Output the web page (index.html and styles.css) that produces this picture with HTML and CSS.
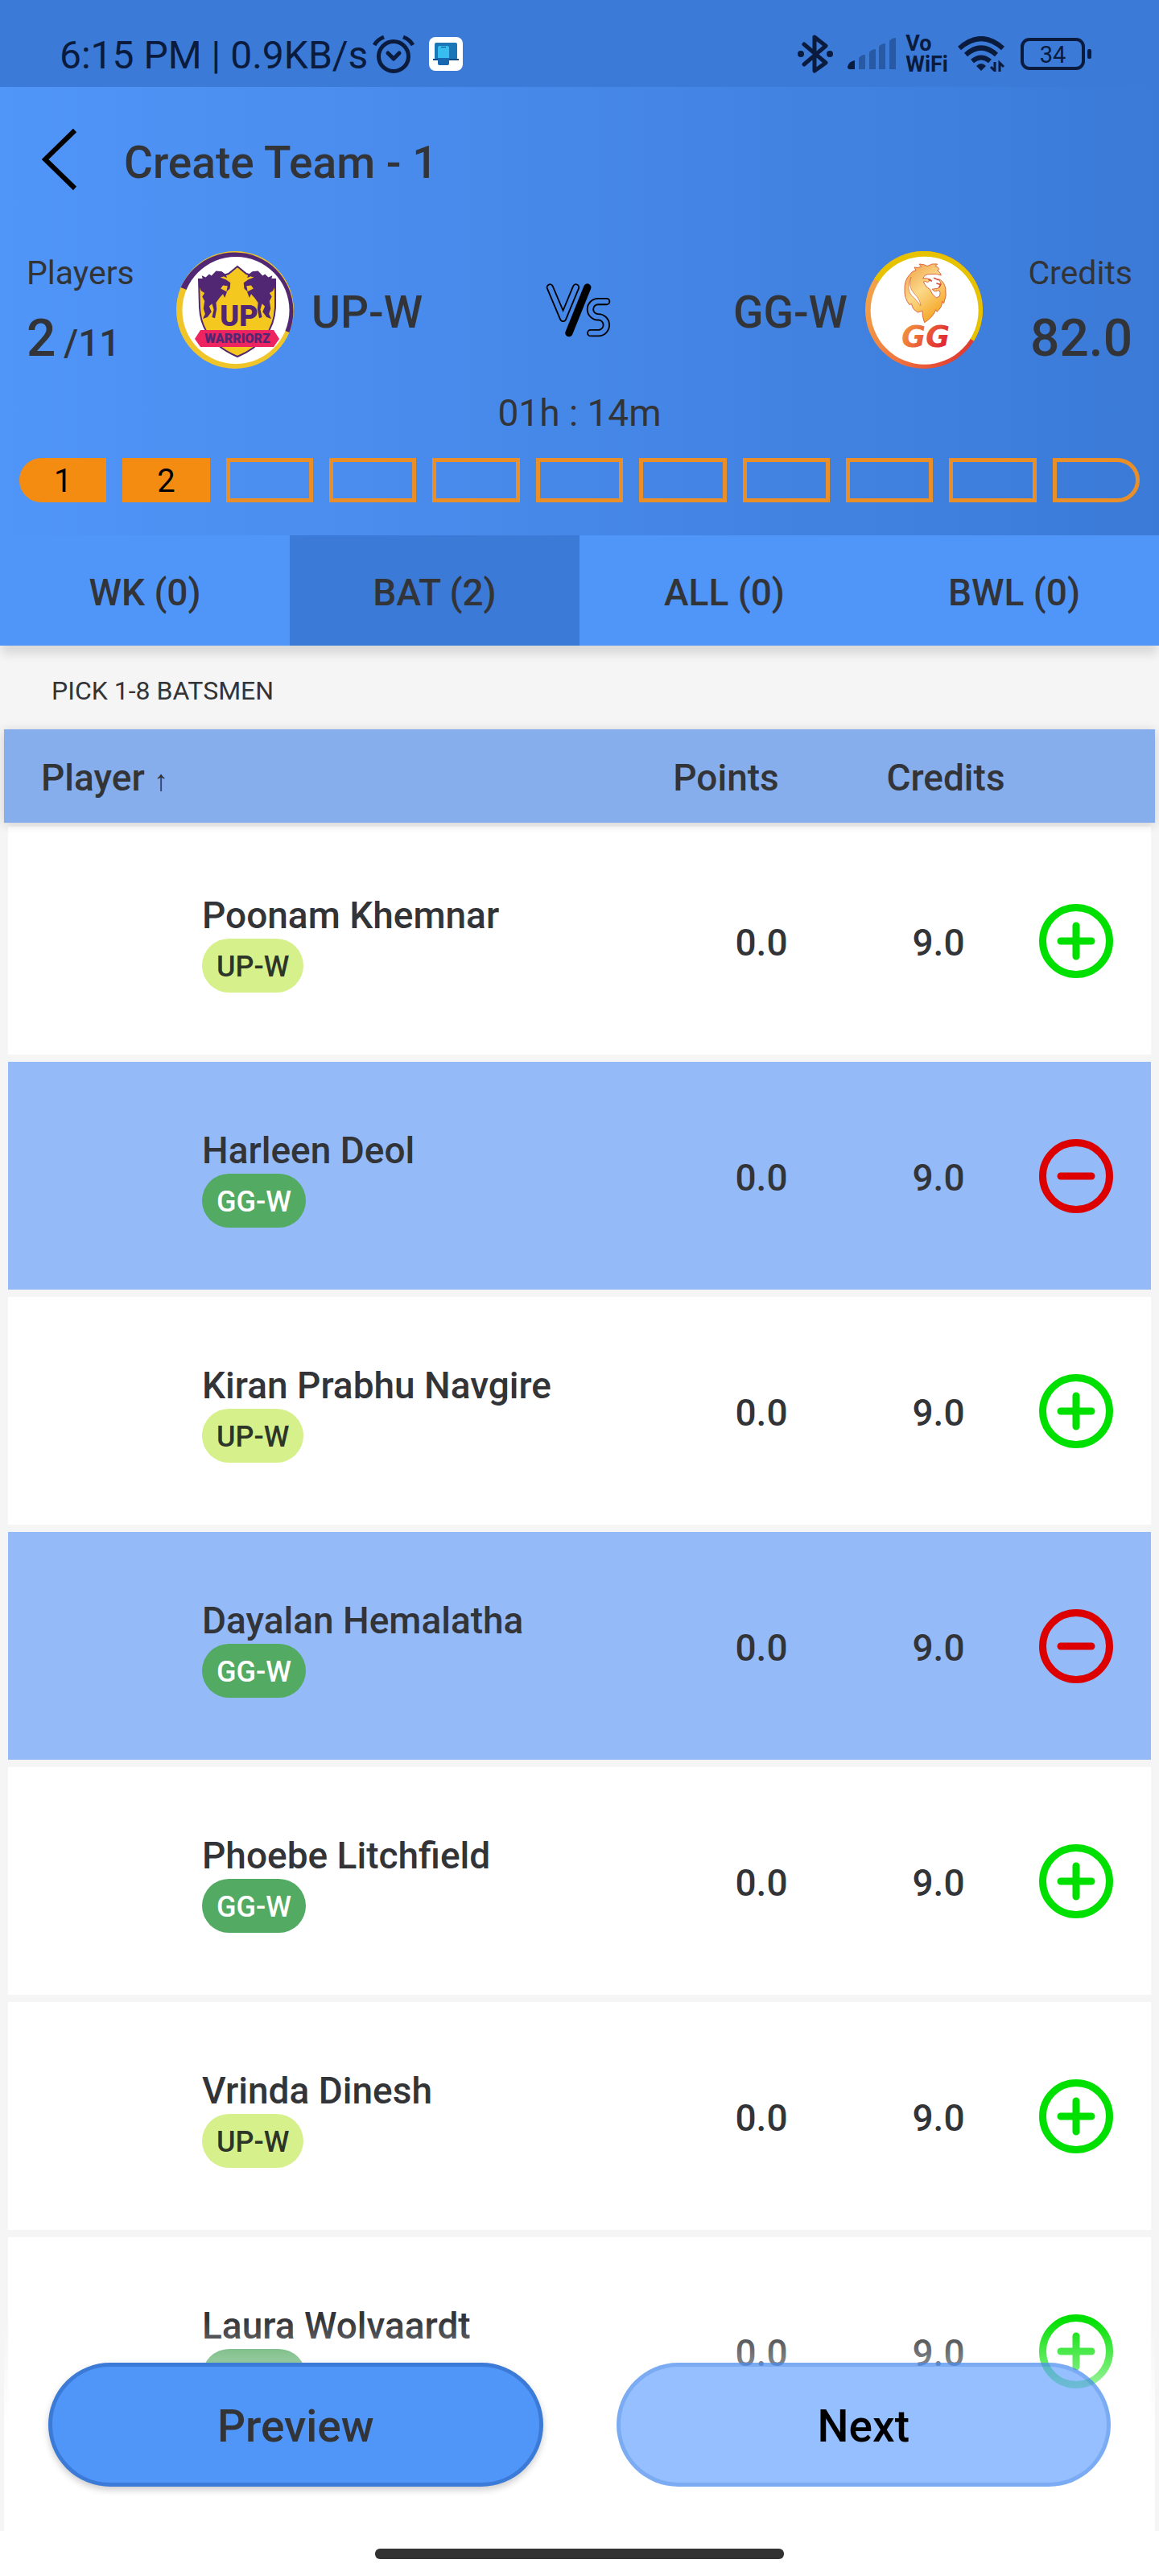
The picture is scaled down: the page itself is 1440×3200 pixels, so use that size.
FILE: index.html
```html
<!DOCTYPE html>
<html lang="en">
<head>
<meta charset="utf-8">
<meta name="viewport" content="width=device-width, initial-scale=1">
<title>Create Team - 1</title>
<link rel="stylesheet" href="styles.css">
</head>
<body>
<svg class="sprite" aria-hidden="true">
  <symbol id="add" viewBox="0 0 92 92">
    <circle cx="46" cy="46" r="41.5"/><path d="M27 46H65M46 27V65"/>
  </symbol>
  <symbol id="remove" viewBox="0 0 92 92">
    <circle cx="46" cy="46" r="41.5"/><path d="M27 46H65"/>
  </symbol>
</svg>

<div class="status-bar">
  <div class="status-left">
    <span class="status-text">6:15 PM | 0.9KB/s</span>
    <svg class="icon-alarm" viewBox="0 0 52 48" width="52" height="48" aria-hidden="true">
      <g fill="none" stroke="#0a1b3d" stroke-width="5">
        <circle cx="26" cy="27" r="18.5"/>
        <path d="M2 13Q6 6 14 3M50 13Q46 6 38 3"/>
        <path d="M19 23L26 30L33 23" stroke-linecap="round" stroke-linejoin="round"/>
      </g>
    </svg>
    <svg class="icon-link" viewBox="0 0 42 42" width="42" height="42" aria-hidden="true">
      <rect width="42" height="42" rx="8" fill="#fff"/>
      <rect x="7" y="7" width="28" height="21" rx="2" fill="#1b76b8"/>
      <rect x="5" y="27" width="32" height="2" fill="#0e4a84"/>
      <rect x="11" y="11" width="14" height="24" rx="2" fill="#1666b0"/>
      <path d="M13 11H23Q25 11 25 13V26H11V13Q11 11 13 11Z" fill="#37bdf0"/>
      <rect x="15" y="12" width="6" height="1" fill="#0e4a84"/>
    </svg>
  </div>
  <div class="status-right">
    <svg viewBox="0 0 46 50" width="46" height="50" aria-hidden="true">
      <path d="M9 13L36 36L22 46V4L36 15L9 38" fill="none" stroke="#0a1b3d" stroke-width="5" stroke-linejoin="round" stroke-linecap="round"/>
      <circle cx="5" cy="25" r="4" fill="#0a1b3d"/><circle cx="41" cy="25" r="4" fill="#0a1b3d"/>
    </svg>
    <svg class="icon-signal" viewBox="0 0 61 40" width="61" height="40" aria-hidden="true">
      <path d="M0 36Q2 29 9 28V39H3Q0 39 0 36Z" fill="#0a1b3d"/>
      <g fill="#2859a5"><path d="M14 25Q17 21 22 21V39H14Z"/><path d="M27 18Q30 14 35 14V39H27Z"/><path d="M39 11Q42 7 47 7V39H39Z"/><path d="M52 4Q55 0 60 0V39H52Z"/></g>
    </svg>
    <span class="vowifi"><span>Vo</span><span>WiFi</span></span>
    <svg class="icon-wifi" viewBox="0 0 59 44" width="59" height="44" aria-hidden="true">
      <g fill="none" stroke="#0a1b3d" stroke-width="6">
        <path d="M2 15Q29 -9 56 15"/><path d="M10 23Q29 6 48 23"/><path d="M18 31Q29 22 40 31"/>
      </g>
      <path d="M23 37Q29 31 35 37L29 43Z" fill="#0a1b3d"/>
      <path d="M46 32V43L41 38M52 44V33L57 38" fill="none" stroke="#0a1b3d" stroke-width="3"/>
    </svg>
    <span class="battery">34</span>
  </div>
</div>

<header class="match-header">
  <div class="app-bar">
    <button class="back" type="button" aria-label="Back">
      <svg viewBox="0 0 44 78" width="44" height="78" aria-hidden="true"><path d="M41 3L4 39L41 75" fill="none" stroke="#000" stroke-width="6"/></svg>
    </button>
    <h1 class="title">Create Team - 1</h1>
  </div>

  <div class="match">
    <div class="stat">
      <span class="stat-label">Players</span>
      <span class="stat-value">2 <small class="stat-total">/11</small></span>
    </div>
    <div class="team">
      <svg viewBox="0 0 146 146" width="146" height="146" role="img" aria-label="UP Warriorz">
        <circle cx="73" cy="73" r="73" fill="#f0c52a"/>
        <path d="M5.6 45A73 73 0 0 1 140.4 101Z" fill="#512773"/>
        <circle cx="74" cy="73.500" r="66.500" fill="#fff"/>
        <path d="M28 35H44L65 28L76 19L87 28L108 35H123V70Q121 112 76 131Q31 112 29 70Z" fill="#f5c81f" stroke="#512773" stroke-width="2"/>
        <g transform="translate(-219 -22) scale(.357 .333)" fill="#512773">
          <path d="M692 172L706 172L702 157L716 164L728 152L736 158L752 140L772 142L786 154L790 166L778 160L766 164L786 172L802 184L800 206L788 218L792 196L776 194L768 206L790 218L782 240L776 226L764 240L752 258L754 282L748 316L738 312L744 284L738 262L728 272L736 292L722 312L706 318L714 300L708 280L712 252L704 236L712 222L700 214L694 200Z"/>
          <path d="M958 172L944 172L948 157L934 164L922 152L914 158L898 140L878 142L864 154L860 166L872 160L884 164L864 172L848 184L850 206L862 218L858 196L874 194L882 206L860 218L868 240L874 226L886 240L898 258L896 282L902 316L912 312L906 284L912 262L922 272L914 292L928 312L944 318L936 300L942 280L938 252L946 236L938 222L950 214L956 200Z"/>
        </g>
        <path d="M30 98H121L128 109L121 119H30L23 109Z" fill="#ed2460"/>
        <text class="logo-up" x="78" y="93" text-anchor="middle">UP</text>
        <text class="logo-warriorz" x="76" y="114" text-anchor="middle">WARRIORZ</text>
      </svg>
      <span class="team-name">UP-W</span>
    </div>
    <svg class="versus" viewBox="354 184 244 202" width="81" height="67" role="img" aria-label="versus">
      <defs>
        <mask id="tube" maskUnits="userSpaceOnUse" x="340" y="170" width="270" height="230">
          <g fill="none" stroke-linecap="round" stroke-linejoin="round">
            <g stroke="#fff" stroke-width="28"><path d="M370 199L419 315L467 199"/><path d="M582 252H550A29 29 0 0 0 550 310A30 30 0 0 1 552 370H522"/></g>
            <g stroke="#000" stroke-width="17"><path d="M370 199L419 315L467 199"/><path d="M582 252H550A29 29 0 0 0 550 310A30 30 0 0 1 552 370H522"/></g>
          </g>
        </mask>
      </defs>
      <rect x="340" y="170" width="270" height="230" mask="url(#tube)"/>
      <path d="M510 199L441 370" stroke="#000" stroke-width="28" stroke-linecap="round"/>
    </svg>
    <div class="team">
      <span class="team-name">GG-W</span>
      <svg viewBox="225 66 438 438" width="146" height="146" role="img" aria-label="GG">
        <defs>
          <linearGradient id="ring" x1="0" y1=".3" x2="1" y2=".8"><stop offset="0" stop-color="#f2a64a"/><stop offset=".5" stop-color="#f0703c"/><stop offset="1" stop-color="#dc3030"/></linearGradient>
          <linearGradient id="fur" x1="0" y1="0" x2=".6" y2="1"><stop offset="0" stop-color="#f09a3e"/><stop offset=".5" stop-color="#fbd98a"/><stop offset="1" stop-color="#f5a623"/></linearGradient>
          <linearGradient id="gg" x1="0" y1="0" x2="1" y2=".4"><stop offset="0" stop-color="#f5a540"/><stop offset="1" stop-color="#e02a33"/></linearGradient>
        </defs>
        <circle cx="444" cy="285" r="219" fill="url(#ring)"/>
        <path d="M258 169A219 219 0 0 1 630 401Z" fill="#e6c200"/>
        <circle cx="446" cy="287" r="201" fill="#fff"/>
        <path d="M392 152Q402 138 414 138L408 126Q422 130 434 124L426 114Q446 114 456 122Q474 110 494 114L486 122Q500 126 500 134L494 138Q506 146 508 156Q490 148 470 152Q446 150 440 168Q452 164 470 172L458 182Q448 176 442 180Q448 200 466 208Q472 226 490 240L502 234Q508 220 500 212L484 216L474 208L498 204L508 190L500 170Q520 180 524 204Q530 230 518 260L512 252Q512 276 492 292L488 284Q480 310 446 332Q436 306 438 288L422 294Q400 284 398 262L390 266Q370 240 372 210Q370 174 392 152Z" fill="url(#fur)" stroke="#dd6740" stroke-width="3" stroke-linejoin="round"/>
        <path d="M396 162Q384 200 406 222Q430 246 432 270Q410 240 398 232Q376 206 396 162Z" fill="#fff" stroke="#dd6740" stroke-width="2"/>
        <path d="M460 172L474 178M480 166L500 174M490 186L506 190L500 202" fill="none" stroke="#d4503a" stroke-width="5"/>
        <text class="logo-gg" x="450" y="422" text-anchor="middle" fill="url(#gg)">GG</text>
      </svg>
    </div>
    <div class="stat stat-end">
      <span class="stat-label">Credits</span>
      <span class="stat-value">82.0</span>
    </div>
  </div>

  <p class="timer">01h : 14m</p>
  <ol class="slots">
    <li class="slot filled">1</li><li class="slot filled">2</li><li class="slot"></li><li class="slot"></li><li class="slot"></li><li class="slot"></li><li class="slot"></li><li class="slot"></li><li class="slot"></li><li class="slot"></li><li class="slot"></li>
  </ol>
</header>

<div class="tabs" role="tablist">
  <button class="tab" type="button" role="tab" aria-selected="false">WK (0)</button>
  <button class="tab" type="button" role="tab" aria-selected="true">BAT (2)</button>
  <button class="tab" type="button" role="tab" aria-selected="false">ALL (0)</button>
  <button class="tab" type="button" role="tab" aria-selected="false">BWL (0)</button>
</div>

<main>
  <p class="hint">PICK 1-8 BATSMEN</p>
  <table class="players">
    <thead>
      <tr class="head-row"><th scope="col" class="col-player">Player <span class="sort">↑</span></th><th scope="col">Points</th><th scope="col">Credits</th><td></td></tr>
    </thead>
    <tbody>
      <tr class="row"><th scope="row" class="player"><span class="name">Poonam Khemnar</span><span class="badge up">UP-W</span></th><td>0.0</td><td>9.0</td><td class="action"><button class="pick add" type="button" aria-label="Add Poonam Khemnar"><svg><use href="#add"/></svg></button></td></tr>
      <tr class="row selected"><th scope="row" class="player"><span class="name">Harleen Deol</span><span class="badge gg">GG-W</span></th><td>0.0</td><td>9.0</td><td class="action"><button class="pick remove" type="button" aria-label="Remove Harleen Deol"><svg><use href="#remove"/></svg></button></td></tr>
      <tr class="row"><th scope="row" class="player"><span class="name">Kiran Prabhu Navgire</span><span class="badge up">UP-W</span></th><td>0.0</td><td>9.0</td><td class="action"><button class="pick add" type="button" aria-label="Add Kiran Prabhu Navgire"><svg><use href="#add"/></svg></button></td></tr>
      <tr class="row selected"><th scope="row" class="player"><span class="name">Dayalan Hemalatha</span><span class="badge gg">GG-W</span></th><td>0.0</td><td>9.0</td><td class="action"><button class="pick remove" type="button" aria-label="Remove Dayalan Hemalatha"><svg><use href="#remove"/></svg></button></td></tr>
      <tr class="row"><th scope="row" class="player"><span class="name">Phoebe Litchfield</span><span class="badge gg">GG-W</span></th><td>0.0</td><td>9.0</td><td class="action"><button class="pick add" type="button" aria-label="Add Phoebe Litchfield"><svg><use href="#add"/></svg></button></td></tr>
      <tr class="row"><th scope="row" class="player"><span class="name">Vrinda Dinesh</span><span class="badge up">UP-W</span></th><td>0.0</td><td>9.0</td><td class="action"><button class="pick add" type="button" aria-label="Add Vrinda Dinesh"><svg><use href="#add"/></svg></button></td></tr>
      <tr class="row"><th scope="row" class="player"><span class="name">Laura Wolvaardt</span><span class="badge gg">GG-W</span></th><td>0.0</td><td>9.0</td><td class="action"><button class="pick add" type="button" aria-label="Add Laura Wolvaardt"><svg><use href="#add"/></svg></button></td></tr>
    </tbody>
  </table>
</main>

<footer class="footer">
  <div class="actions">
    <button class="btn preview" type="button">Preview</button>
    <button class="btn next" type="button">Next</button>
  </div>
  <div class="nav-bar"><span class="nav-handle"></span></div>
</footer>
</body>
</html>
```

FILE: styles.css
```css
:root {
  --blue: #5095f8;
  --blue-dark: #3b7ad7;
  --ink: #323438;
  --navy: #0a1b3d;
  --orange: #f48c12;
}

* { box-sizing: border-box; }

body {
  margin: 0;
  min-height: 100vh;
  padding-bottom: 56px;
  background: #f5f5f5;
  color: var(--ink);
  font-family: Roboto, "Liberation Sans", sans-serif;
}

h1, p, ol { margin: 0; padding: 0; }

button {
  padding: 0;
  border: 0;
  background: none;
  color: inherit;
  font-family: inherit;
}

svg { display: block; flex: none; }
.sprite { position: absolute; width: 0; height: 0; }

/* System status bar */
.status-bar {
  display: flex;
  justify-content: space-between;
  height: 108px;
  padding: 28px 92px 0 74px;
  background: var(--blue-dark);
  color: var(--navy);
}
.status-left, .status-right { display: flex; align-items: center; height: 78px; }
.status-text { padding-top: 4px; font-size: 48px; line-height: 56px; }
.icon-alarm { margin-left: 6px; }
.icon-link { margin-left: 18px; }
.icon-signal { margin-left: 17px; }
.vowifi {
  display: flex;
  flex-direction: column;
  margin-left: 11px;
  font-size: 27px;
  font-weight: 700;
  line-height: 26px;
}
.icon-wifi { margin-left: 12px; }
.battery {
  position: relative;
  width: 80px;
  height: 40px;
  margin-left: 19px;
  border: 4px solid var(--navy);
  border-radius: 11px;
  font-size: 29px;
  line-height: 34px;
  text-align: center;
}
.battery::after {
  content: "";
  position: absolute;
  top: 10px;
  right: -12px;
  width: 5px;
  height: 12px;
  border-radius: 2px;
  background: var(--navy);
}

/* Match header */
.match-header {
  padding-bottom: 41px;
  background: linear-gradient(90deg, var(--blue), var(--blue-dark));
}
.app-bar {
  display: flex;
  align-items: center;
  gap: 58px;
  height: 188px;
  padding-left: 52px;
}
.back { padding-bottom: 8px; }
.title { font-size: 55px; font-weight: 500; line-height: 64px; }
.match {
  display: grid;
  grid-template-columns: 186px auto 1fr auto 186px;
  align-items: center;
  padding: 16px 33px 0;
}
.stat { display: flex; flex-direction: column; gap: 22px; padding-top: 2px; }
.stat-end { align-items: flex-end; }
.stat-label { font-size: 41px; line-height: 48px; }
.stat-value { font-size: 64px; font-weight: 500; line-height: 72px; }
.stat-total { margin-left: -6px; font-size: 46px; line-height: 46px; }
.team { display: flex; align-items: center; gap: 22px; }
.team-name { padding-top: 6px; font-size: 55px; font-weight: 500; line-height: 64px; }
.versus { justify-self: center; }
.timer {
  padding: 28px 0 29px;
  font-size: 46px;
  line-height: 54px;
  text-align: center;
}
.slots { display: flex; gap: 20px; padding: 0 24px; list-style: none; }
.slot {
  flex: 1 1 0;
  height: 55px;
  border: 5px solid #e88f2a;
  color: #000;
  font-size: 40px;
  line-height: 47px;
  text-align: center;
}
.slot.filled { border-color: var(--orange); background: var(--orange); }
.slot:first-child { border-radius: 28px 0 0 28px; }
.slot:last-child { border-radius: 0 28px 28px 0; }

.logo-up, .logo-warriorz { fill: #512773; font-family: Roboto, sans-serif; font-weight: 900; }
.logo-up { font-family: "Liberation Sans Narrow", Roboto, sans-serif; font-size: 36px; }
.logo-warriorz { font-size: 16px; }
.logo-gg { font-family: "DejaVu Sans", sans-serif; font-size: 110px; font-style: italic; font-weight: 700; }

/* Role tabs */
.tabs {
  position: relative;
  display: flex;
  box-shadow: 0 12px 12px -2px rgba(0, 0, 0, .12);
}
.tab {
  flex: 1 1 0;
  height: 137px;
  padding-top: 4px;
  background: var(--blue);
  font-size: 46px;
  font-weight: 500;
  line-height: 54px;
}
.tab[aria-selected="true"] { background: var(--blue-dark); }

/* Player list */
.hint { padding: 37px 64px 29px; font-size: 32px; line-height: 38px; }
.players, .players thead, .players tbody { display: block; }
.head-row, .row { display: grid; align-items: center; }
.head-row {
  position: relative;
  grid-template-columns: 1fr 396px 150px 185px;
  height: 116px;
  margin: 0 5px 5px;
  background: #86aeec;
  box-shadow: 0 2px 12px rgba(0, 0, 0, .16);
}
.row {
  grid-template-columns: 1fr 284px 156px 186px;
  min-height: 283px;
  margin: 0 10px 9px;
  background: #fff;
}
.row.selected { background: #94baf8; }
.players th, .players td {
  padding: 4px 0 0;
  font-size: 46px;
  font-weight: 500;
  line-height: 54px;
  text-align: center;
}
.players .col-player { padding-left: 46px; text-align: left; }
.sort { font-size: 36px; font-weight: 400; line-height: 30px; }
.players .player {
  display: flex;
  flex-direction: column;
  align-items: flex-start;
  gap: 2px;
  padding: 6px 0 0 241px;
}
.badge {
  padding: 14px 18px 11px;
  border-radius: 34px;
  font-size: 36px;
  line-height: 42px;
}
.badge.up { background: #d6f08c; color: #2d3428; }
.badge.gg { background: #53aa62; color: #fff; }
.players .action { display: flex; justify-content: center; padding: 0; }
.pick { width: 92px; height: 92px; border-radius: 50%; }
.pick svg {
  width: 92px;
  height: 92px;
  fill: none;
  stroke: currentColor;
  stroke-width: 9px;
  stroke-linecap: round;
}
.pick.add { color: #00e000; }
.pick.remove { color: #dc0000; }

/* Bottom actions float over the end of the list */
.footer { position: fixed; right: 0; bottom: 0; left: 0; }
.actions {
  display: flex;
  gap: 91px;
  margin: 0 5px;
  padding: 75px 55px 55px;
  background: linear-gradient(rgba(255, 255, 255, 0) 20px, #fff 160px);
}
.btn {
  flex: 1 1 0;
  height: 154px;
  padding-top: 4px;
  border-radius: 77px;
  font-size: 55px;
  font-weight: 500;
}
.preview {
  border: 5px solid var(--blue-dark);
  background: var(--blue);
  box-shadow: 0 4px 8px rgba(0, 0, 0, .2);
}
.next {
  border: 5px solid rgba(59, 122, 215, .3);
  background: rgba(80, 149, 255, .6);
  color: #000;
}
.nav-bar {
  display: flex;
  justify-content: center;
  height: 56px;
  padding-top: 22px;
  background: #fff;
}
.nav-handle { width: 508px; height: 13px; border-radius: 6px; background: #323232; }
```
